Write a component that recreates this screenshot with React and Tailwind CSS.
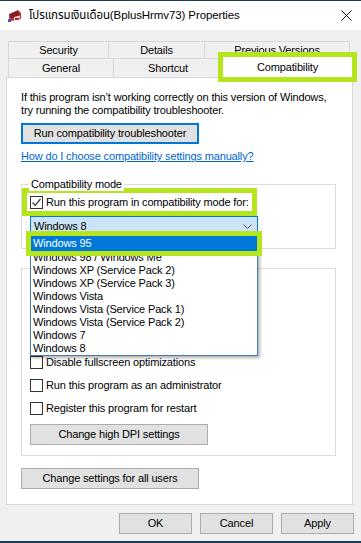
const LIME = "outline-[5px] outline-[#b5e61d] outline-offset-0";

function AppIcon() {
  return (
    <svg width="16" height="14" viewBox="0 0 16 14">
      <path d="M2 5 L11 1 L14 4 L14 10 L4 12 L2 9 Z" fill="#d9262c" />
      <path d="M3 6 L11 2.5 M3.5 7.5 L12 4 M4 9 L12.5 5.5" stroke="#222" strokeWidth="0.9" />
      <path d="M7 8 L13 6.5 L13 9.5 L7 11 Z" fill="#f7c9d0" />
      <rect x="1" y="10" width="3" height="3" fill="#2a5bd7" />
      <rect x="8" y="9" width="4" height="2" fill="#c0262e" />
    </svg>
  );
}

function CheckBox({ checked }) {
  return (
    <span className="flex h-[13px] w-[13px] shrink-0 items-center justify-center border border-[#333] bg-white">
      {checked && (
        <svg width="11" height="11" viewBox="0 0 11 11">
          <path d="M1.5 5.5 L4.2 8.3 L9.5 2" fill="none" stroke="#333" strokeWidth="1.2" />
        </svg>
      )}
    </span>
  );
}

function Btn({ children, className = "" }) {
  return (
    <div className={`flex h-[21px] items-center justify-center border border-[#adadad] bg-[#e1e1e1] ${className}`}>
      {children}
    </div>
  );
}

const versions = [
  "Windows 98 / Windows Me",
  "Windows XP (Service Pack 2)",
  "Windows XP (Service Pack 3)",
  "Windows Vista",
  "Windows Vista (Service Pack 1)",
  "Windows Vista (Service Pack 2)",
  "Windows 7",
  "Windows 8",
];

export default function App() {
  return (
    <div className="relative flex h-[543px] w-[361px] flex-col overflow-hidden whitespace-nowrap border-t border-b-[2px] border-[#1d3a55] bg-[#f0f0f0] font-['Liberation_Sans',sans-serif] text-[11px] leading-[13px] tracking-[-0.15px] text-black">
      {/* title bar */}
      <div className="flex h-[29px] shrink-0 items-center bg-white pl-[7px] pr-[9px]">
        <AppIcon />
        <span className="ml-[6px] flex-1 font-['Liberation_Sans','Noto_Sans_Thai','Tahoma',sans-serif] text-[11.5px] tracking-[-0.1px]">
          โปรแกรมเงินเดือน(BplusHrmv73) Properties
        </span>
        <svg width="11" height="11" viewBox="0 0 11 11">
          <path d="M0.5 0.5 L10.5 10.5 M10.5 0.5 L0.5 10.5" stroke="#111" strokeWidth="1" />
        </svg>
      </div>

      {/* tabs */}
      <div className="mt-[11px] flex h-[18px] pl-[8px]">
        <div className="flex w-[101px] items-center justify-center border border-[#d9d9d9]">Security</div>
        <div className="flex w-[96px] items-center justify-center border border-l-0 border-[#d9d9d9]">Details</div>
        <div className="flex w-[145px] items-center justify-center border border-l-0 border-[#d9d9d9]">Previous Versions</div>
      </div>
      <div className="flex h-[18px] items-end pl-[8px]">
        <div className="flex h-[18px] w-[106px] items-center justify-center border border-t-0 border-b-0 border-[#d9d9d9]">General</div>
        <div className="flex h-[18px] w-[109px] items-center justify-center border-r border-[#d9d9d9]">Shortcut</div>
        <div className={`relative z-10 -mt-[2px] flex h-[20px] w-[129px] items-center justify-center bg-white ${LIME}`}>Compatibility</div>
      </div>

      {/* panel */}
      <div className="mx-[6px] flex h-[428px] w-[347px] flex-col border border-[#d9d9d9] bg-white pl-[14px] pr-[17px] pt-[13px]">
        <p className="leading-[12.6px]">
          If this program isn’t working correctly on this version of Windows,
          <br />
          try running the compatibility troubleshooter.
        </p>
        <div className="mt-[7px] flex h-[21px] w-[178px] items-center justify-center border-2 border-[#0078d7] bg-[#e1e1e1]">
          Run compatibility troubleshooter
        </div>
        <div className="mt-[6px] text-[#0066cc] underline">How do I choose compatibility settings manually?</div>

        {/* compatibility mode group */}
        <div className="relative mt-[21px] h-[65px] w-[315px] border border-[#dcdcdc] pl-[5px] pt-[8px]">
          <span className="absolute -top-[7px] left-[7px] bg-white px-[2px]">Compatibility mode</span>
          <div className={`flex h-[18px] w-[225px] items-center gap-[3px] bg-white pl-[3px] ${LIME}`}>
            <CheckBox checked />
            <span>Run this program in compatibility mode for:</span>
          </div>
          <div className="relative ml-[3px] mt-[5px] w-[228px]">
            <div className="flex h-[21px] items-center justify-between border border-[#0078d7] bg-[#cce4f7] pl-[3px] pr-[5px]">
              <span>Windows 8</span>
              <svg width="9" height="5" viewBox="0 0 9 5">
                <path d="M0.5 0.5 L4.5 4.5 L8.5 0.5" fill="none" stroke="#555" strokeWidth="1" />
              </svg>
            </div>
            {/* open dropdown list */}
            <div className="absolute left-0 top-[19px] z-20 w-[228px] border border-[#4a78b0] bg-white shadow-[2px_2px_3px_rgba(0,0,0,0.3)]">
              <div className={`flex h-[15px] items-center bg-[#0078d7] pl-[2px] text-white ${LIME}`}>Windows 95</div>
              {versions.map((v) => (
                <div key={v} className="flex h-[13px] items-center pl-[2px]">{v}</div>
              ))}
            </div>
          </div>
        </div>

        {/* settings group (upper part hidden under the open list) */}
        <div className="relative mt-[19px] flex h-[188px] w-[315px] flex-col border border-[#dcdcdc] pl-[8px] pt-[87px]">
          <div className="flex h-[13px] items-center gap-[3px]"><CheckBox /><span>Disable fullscreen optimizations</span></div>
          <div className="mt-[10px] flex h-[13px] items-center gap-[3px]"><CheckBox /><span>Run this program as an administrator</span></div>
          <div className="mt-[10px] flex h-[13px] items-center gap-[3px]"><CheckBox /><span>Register this program for restart</span></div>
          <Btn className="mt-[9px] w-[178px]">Change high DPI settings</Btn>
        </div>

        <Btn className="mt-[12px] w-[178px]">Change settings for all users</Btn>
      </div>

      {/* footer buttons */}
      <div className="mt-[8px] flex justify-end gap-[8px] pr-[7px]">
        <Btn className="w-[73px]">OK</Btn>
        <Btn className="w-[73px]">Cancel</Btn>
        <Btn className="w-[73px]">Apply</Btn>
      </div>
    </div>
  );
}
